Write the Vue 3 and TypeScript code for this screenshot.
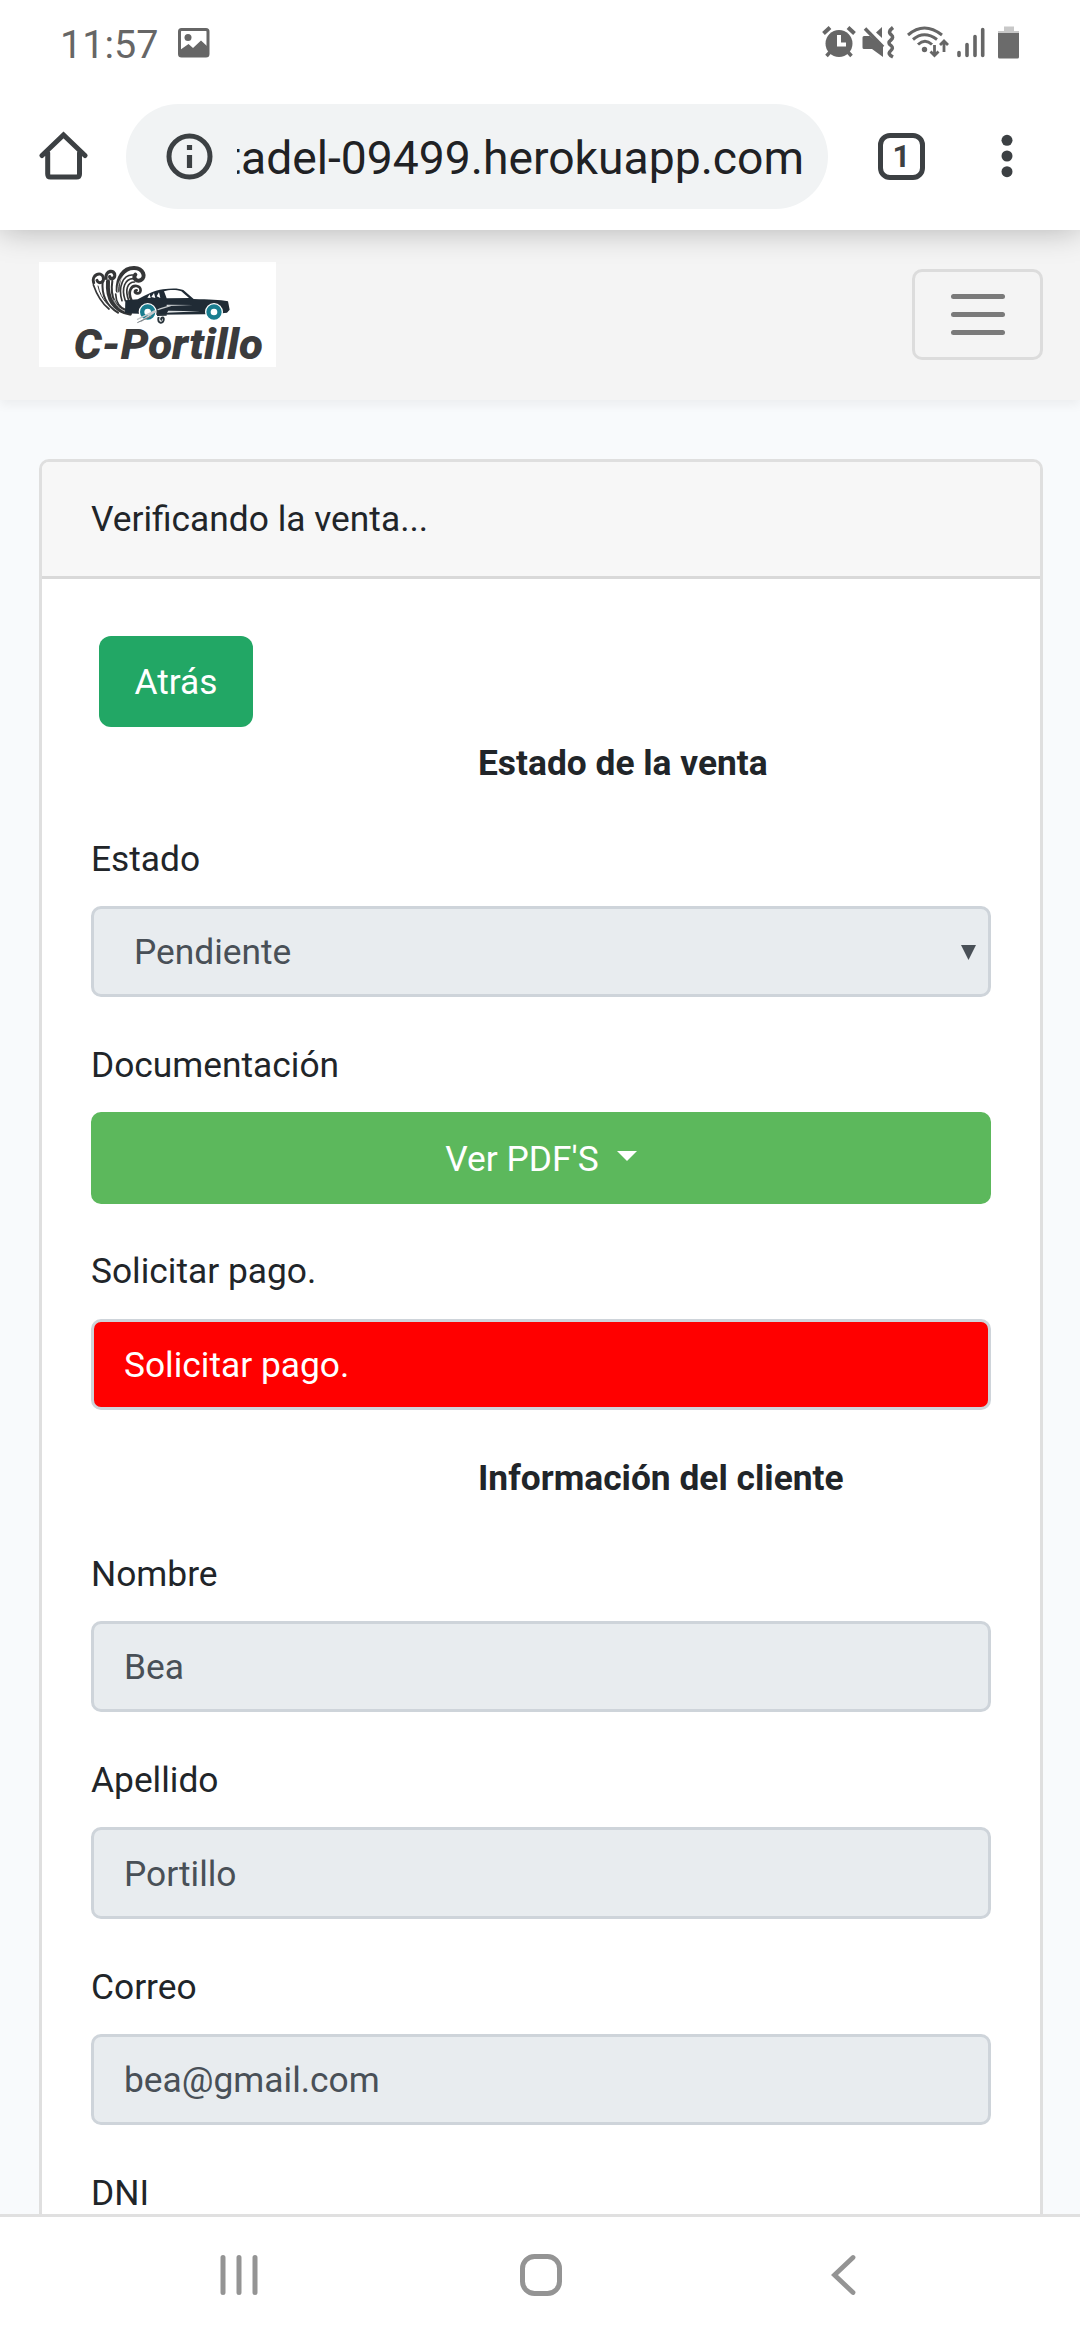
<script setup lang="ts">
interface Field {
  label: string
  value: string
}

const clientFields: Field[] = [
  { label: 'Nombre', value: 'Bea' },
  { label: 'Apellido', value: 'Portillo' },
  { label: 'Correo', value: 'bea@gmail.com' },
]
</script>

<template>
  <div class="screen">
    <header class="status">
      <span class="time">11:57</span>
      <svg class="photo" width="32" height="30" viewBox="0 0 32 30">
        <rect x="1.5" y="1.5" width="28.5" height="26.5" rx="2" fill="none" stroke="#666" stroke-width="3" />
        <circle cx="10" cy="9.5" r="3.5" fill="#666" />
        <path d="M2 22 L10.500 16 L15 20 L23 12.500 L30 19 V28 H2Z" fill="#666" />
      </svg>
      <svg class="indicators" width="200" height="36" viewBox="0 0 200 36">
        <g fill="#666" stroke="none">
          <circle cx="17" cy="19.500" r="13.500" />
          <path d="M1.500 9.500 L8 3.500 M26 3.500 L32.500 9.500" stroke="#666" stroke-width="4" />
          <path d="M9 27 L4.500 32 M25 27 L29.500 32" stroke="#666" stroke-width="3.500" />
          <path d="M17 11 V20.500 H24" fill="none" stroke="#fff" stroke-width="4" />
          <path d="M42 12 H48 L61 23 V33 L50 25 H42 Q40.500 25 40.500 23.500 V13.500 Q40.500 12 42 12Z" />
          <path d="M60 3 V14 L54 8.500Z" />
        </g>
        <g fill="none" stroke="#666" stroke-width="3.500">
          <path d="M43 4.500 L61 23" />
          <path d="M71 3.500 Q65 8 69.500 11 Q72 13 69 16 Q65 19 69 21.500 Q72 24 68.500 27 Q65 30 71 33" />
          <path d="M86 11 Q102 -3 120 11 M91 15.500 Q102 6 115 15.500 M96 20.500 Q103 14 110 20.500" stroke-width="3" />
          <path d="M112.500 21 V31 M108.500 27.500 L112.500 31.500 L116.500 27.500 M122 28 V18 M118 21 L122 17 L126 21" stroke-width="2.800" />
        </g>
        <circle cx="102.500" cy="25.500" r="2.700" fill="#666" />
        <g stroke="#666" stroke-width="3.600" stroke-linecap="round">
          <path d="M137 28.500 V31.500 M145 20.500 V31.500 M153 12.500 V31.500 M160.700 5.500 V31.500" />
        </g>
        <path d="M182 2.500 H192 V7 H197 V10 H176 V7 H182Z" fill="#c8c8c8" />
        <path d="M176 9 H197 V33 Q197 34.500 195.500 34.500 H177.500 Q176 34.500 176 33Z" fill="#6b6b6b" />
      </svg>
    </header>

    <div class="browser">
      <svg class="home" width="50" height="50" viewBox="0 0 50 50">
        <path d="M4 24.500 L25.500 4 L47 24.500 M9.700 22 V43 Q9.700 46 12.500 46 H38.500 Q41.500 46 41.500 43 V22" fill="none" stroke="#3c4043" stroke-width="5" stroke-linecap="round" />
      </svg>
      <div class="omnibox">
        <svg width="47" height="47" viewBox="0 0 47 47">
          <circle cx="23.500" cy="23.500" r="20.500" fill="none" stroke="#3c4043" stroke-width="5" />
          <path d="M23.500 12 V17 M23.500 22 V35" stroke="#3c4043" stroke-width="5.200" />
        </svg>
        <div class="url"><span>citadel-09499.herokuapp.com</span></div>
      </div>
      <div class="tabs">1</div>
      <svg class="dots" width="14" height="50" viewBox="0 0 14 50">
        <g fill="#3c4043">
          <circle cx="7" cy="9.300" r="5.500" />
          <circle cx="7" cy="25" r="5.500" />
          <circle cx="7" cy="40.700" r="5.500" />
        </g>
      </svg>
    </div>

    <nav class="navbar">
      <svg class="logo" width="237" height="105" viewBox="27 36 711 315">
        <rect x="27" y="36" width="711" height="315" fill="#fff" />
        <g fill="none" stroke="#353637" stroke-linecap="round">
          <path d="M191 98 C183 76 213 61 220 82 C224 98 205 104 201 91" stroke-width="9" />
          <path d="M190 104 C200 133 211 156 237 177" stroke-width="5" />
          <path d="M204 108 C208 128 218 147 230 160" stroke-width="3" />
          <path d="M218 94 C214 135 228 166 264 188" stroke-width="6" />
          <path d="M228 85 C225 61 255 57 254 77 C253 88 241 89 239 80" stroke-width="10" />
          <path d="M234 94 C230 151 252 181 300 191" stroke-width="12" />
          <path d="M247 93 C239 145 260 177 294 185" stroke-width="6" />
          <path d="M263 122 C262 84 279 53 313 54 C341 55 348 82 333 90 C320 97 307 83 316 74" stroke-width="12" />
          <path d="M257 132 C258 157 270 174 289 180" stroke-width="5" />
          <path d="M276 152 C263 110 280 73 308 75" stroke-width="5" />
          <path d="M286 152 C272 114 286 85 311 86" stroke-width="5" />
          <path d="M296 151 C284 120 292 96 314 96" stroke-width="5" />
          <path d="M304 150 C292 125 304 105 320 108 C337 112 334 132 321 130 C312 128 314 120 320 121" stroke-width="8" />
          <path d="M252 150 C260 171 275 181 292 186" stroke="#fff" stroke-width="2" />
          <path d="M269 149 C251 111 276 65 306 66" stroke="#fff" stroke-width="2" />
        </g>
        <path d="M286 151 L323 148 C351 134 374 121 399 118 C424 114 447 114 460 120 L491 147 C536 148 570 149 594 154 L599 179 L591 188 L577 190 L526 193 L382 194 L326 191 L285 190Z" fill="#202b35" />
        <path d="M402 124 L410 145 L477 144 L454 124 C438 118 417 119 402 124Z" fill="#fff" />
        <path d="M352 143 L359 133 L362 144Z M364 141 L372 129 L376 144Z M380 139 L387 127 L391 144Z" fill="#fff" />
        <path d="M410 164 L489 165 L410 168Z M415 182 L510 184 L411 188Z" fill="#dfe3e5" />
        <circle cx="353" cy="186" r="27" fill="#fff" />
        <circle cx="552" cy="186" r="27" fill="#fff" />
        <circle cx="353" cy="186" r="16.500" fill="none" stroke="#197d8f" stroke-width="13" />
        <circle cx="552" cy="186" r="16.500" fill="none" stroke="#197d8f" stroke-width="13" />
        <path d="M321 209 L375 182 L332 215 L388 177 L422 167" fill="none" stroke="#c5c9cb" stroke-width="4" />
        <path d="M322 218 L365 198" stroke="#737b80" stroke-width="3" />
        <path d="M383 180 L384 195 L410 194 M386 201 C378 223 405 223 401 205 C398 198 389 208 396 210" fill="none" stroke="#29343b" stroke-width="6" />
        <text x="131" y="328" textLength="568" lengthAdjust="spacingAndGlyphs" font-family="Roboto, sans-serif" font-style="italic" font-weight="900" font-size="127" fill="#3b3b3c">C-Portillo</text>
      </svg>
      <button class="toggler" type="button" aria-label="Menu">
        <span></span><span></span><span></span>
      </button>
    </nav>

    <main class="content">
      <section class="card">
        <div class="card-header">Verificando la venta...</div>
        <div class="card-body">
          <button class="back" type="button">Atrás</button>
          <h2 class="title">Estado de la venta</h2>
          <div class="group">
            <label>Estado</label>
            <div class="control select">
              <span>Pendiente</span>
              <svg width="15" height="15" viewBox="0 0 15 15"><path d="M0 0 H15 L7.500 15Z" fill="#495057" /></svg>
            </div>
          </div>
          <div class="group">
            <label>Documentación</label>
            <button class="control pdf" type="button">Ver PDF'S<i class="caret"></i></button>
          </div>
          <div class="group">
            <label>Solicitar pago.</label>
            <div class="control pay">Solicitar pago.</div>
          </div>
          <h2 class="title">Información del cliente</h2>
          <div v-for="field in clientFields" :key="field.label" class="group">
            <label>{{ field.label }}</label>
            <div class="control">{{ field.value }}</div>
          </div>
          <div class="group"><label>DNI</label></div>
        </div>
      </section>
    </main>

    <footer class="system">
      <svg width="40" height="44" viewBox="0 0 40 44">
        <path d="M4 4.500 V39.500 M20 4.500 V39.500 M36 4.500 V39.500" stroke="#949494" stroke-width="5" stroke-linecap="round" />
      </svg>
      <svg class="home-key" width="44" height="44" viewBox="0 0 44 44">
        <rect x="3.500" y="3.500" width="37" height="37" rx="12" fill="none" stroke="#949494" stroke-width="5" />
      </svg>
      <svg width="30" height="44" viewBox="0 0 30 44">
        <path d="M24 4.500 L5.500 22 L24 39.500" fill="none" stroke="#949494" stroke-width="4.800" stroke-linecap="round" />
      </svg>
    </footer>
  </div>
</template>

<style>
body {
  margin: 0;
  overflow: hidden;
}
</style>

<style scoped>
.screen {
  width: 1080px;
  height: 2340px;
  overflow: hidden;
  display: flex;
  flex-direction: column;
  background: #f8fafc;
  font-family: Roboto, sans-serif;
  font-size: 35.350px;
  line-height: 56px;
  color: #212529;
}
.screen * {
  box-sizing: border-box;
}
svg {
  display: block;
  flex: none;
}
button {
  font: inherit;
  margin: 0;
}
.status {
  position: relative;
  z-index: 3;
  height: 82px;
  flex: none;
  display: flex;
  align-items: flex-start;
  background: #fff;
  padding: 0 38px 0 60px;
}
.time {
  width: 118px;
  padding-top: 17px;
  font-size: 39.500px;
  color: #666;
}
.photo {
  margin-top: 28px;
}
.indicators {
  margin: 24px 20px 0 auto;
}
.browser {
  position: relative;
  z-index: 2;
  height: 148px;
  flex: none;
  display: flex;
  align-items: center;
  background: #fff;
  box-shadow: 0 0 30px rgba(0, 0, 0, 0.28);
  padding-left: 38px;
}
.omnibox {
  width: 702px;
  height: 105px;
  margin: 0 50px 0 38px;
  padding-left: 40px;
  border-radius: 53px;
  background: #f1f3f4;
  display: flex;
  align-items: center;
}
.url {
  width: 567px;
  margin: 3px 0 0 24px;
  overflow: hidden;
  display: flex;
  justify-content: flex-end;
  font-size: 46.250px;
  color: #202124;
  white-space: nowrap;
}
.tabs {
  width: 47px;
  height: 47px;
  border: 5px solid #3c4043;
  border-radius: 12px;
  text-align: center;
  font-size: 31px;
  line-height: 37px;
  font-weight: 700;
  color: #3c4043;
}
.dots {
  margin-left: 75px;
}
.navbar {
  position: relative;
  z-index: 1;
  height: 170px;
  flex: none;
  display: flex;
  justify-content: space-between;
  align-items: flex-start;
  padding: 32px 37px 0 39px;
  background: #f4f4f4;
  box-shadow: 0 5px 10px rgba(0, 0, 0, 0.05);
}
.toggler {
  width: 131px;
  height: 91px;
  margin-top: 7px;
  padding: 0;
  border: 3px solid #dcdcdc;
  border-radius: 10px;
  background: none;
  display: flex;
  flex-direction: column;
  align-items: center;
  justify-content: center;
  gap: 13px;
}
.toggler span {
  width: 54px;
  height: 4.700px;
  border-radius: 3px;
  background: #7a7a7a;
}
.content {
  flex: 1;
  min-height: 0;
  overflow: hidden;
  padding: 59px 37px 0 39px;
}
.card {
  height: 2000px;
  border: 3px solid #dfdfdf;
  border-radius: 10px;
  background: #fff;
  background-clip: padding-box;
}
.card-header {
  height: 117px;
  padding: 29px 49px 0;
  border-bottom: 3px solid #d9d9d9;
  border-radius: 7px 7px 0 0;
  background: #f7f7f7;
}
.card-body {
  padding: 57px 49px 0;
}
.back {
  display: block;
  width: 154px;
  height: 91px;
  margin-left: 8px;
  padding: 1px 0 0;
  border: 0;
  border-radius: 12px;
  background: #22a765;
  color: #fff;
}
.title {
  margin: 0 0 40px 387px;
  font-size: 35.350px;
  line-height: 56px;
  font-weight: 700;
}
.back + .title {
  margin-top: 7.800px;
}
.group {
  margin-bottom: 39.800px;
}
label {
  display: block;
  margin-bottom: 19.300px;
}
.control {
  display: flex;
  align-items: center;
  width: 900px;
  height: 91.250px;
  padding: 1px 30px 0;
  border: 3px solid #ced4da;
  border-radius: 10px;
  background: #e8ecef;
  color: #495057;
}
.select {
  justify-content: space-between;
  padding: 1px 12px 0 40px;
}
.pdf {
  justify-content: center;
  border-color: #5cb85c;
  background: #5cb85c;
  color: #fff;
}
.caret {
  margin: -6px 0 0 18px;
  border-top: 10px solid #fff;
  border-left: 10px solid transparent;
  border-right: 10px solid transparent;
}
.pay {
  background: #f00;
  color: #fff;
}
.system {
  height: 126px;
  flex: none;
  display: flex;
  align-items: flex-start;
  justify-content: space-between;
  padding: 36px 221px 0 219px;
  border-top: 3px solid #e0e0e0;
  background: #fff;
}
.home-key {
  margin-right: 6px;
}
</style>
